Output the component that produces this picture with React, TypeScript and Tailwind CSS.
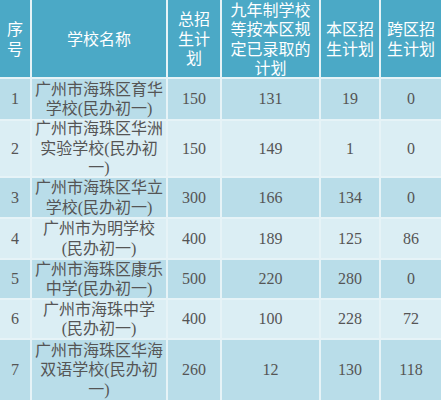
const header = [
  ['序', '号'],
  ['学校名称'],
  ['总招', '生计', '划'],
  ['九年制学校', '等按本区规', '定已录取的', '计划'],
  ['本区招', '生计划'],
  ['跨区招', '生计划'],
];

const rows = [
  { no: '1', name: ['广州市海珠区育华', '学校(民办初一)'], total: '150', done: '131', local: '19', cross: '0', h: 'h-[40px]', dark: true },
  { no: '2', name: ['广州市海珠区华洲', '实验学校(民办初', '一)'], total: '150', done: '149', local: '1', cross: '0', h: 'h-[55px]', dark: false },
  { no: '3', name: ['广州市海珠区华立', '学校(民办初一)'], total: '300', done: '166', local: '134', cross: '0', h: 'h-[39px]', dark: true },
  { no: '4', name: ['广州市为明学校', '(民办初一)'], total: '400', done: '189', local: '125', cross: '86', h: 'h-[39px]', dark: false },
  { no: '5', name: ['广州市海珠区康乐', '中学(民办初一)'], total: '500', done: '220', local: '280', cross: '0', h: 'h-[38px]', dark: true },
  { no: '6', name: ['广州市海珠中学', '(民办初一)'], total: '400', done: '100', local: '228', cross: '72', h: 'h-[38px]', dark: false },
  { no: '7', name: ['广州市海珠区华海', '双语学校(民办初', '一)'], total: '260', done: '12', local: '130', cross: '118', h: 'h-[60px]', dark: true },
];

function Lines({ lines }: { lines: string[] }) {
  return (
    <div className="flex flex-col items-center">
      {lines.map((l, i) => (
        <span key={i} className="whitespace-nowrap h-[19.5px] leading-[19.5px]">{l}</span>
      ))}
    </div>
  );
}

export default function App() {
  return (
    <div
      className="w-[441px] h-[400px] bg-[#e6f3f7] grid grid-cols-[30px_134px_52px_97px_58px_1fr] gap-[2px] text-[16px] leading-[19.5px] overflow-hidden"
      style={{ fontFamily: '"Liberation Serif", "Noto Sans CJK SC", serif' }}
    >
      {header.map((lines, i) => (
        <div
          key={i}
          className="h-[77px] bg-[#4ba9c6] text-white flex items-center justify-center text-center"
          style={{ fontFamily: '"Noto Sans CJK SC", sans-serif' }}
        >
          <Lines lines={lines} />
        </div>
      ))}
      {rows.map((r) => {
        const bg = r.dark ? 'bg-[#b9dde9]' : 'bg-[#dbeef4]';
        const cell = `${r.h} ${bg} flex items-center justify-center text-center text-[#555555]`;
        return [
          <div key={r.no + 'a'} className={cell}>{r.no}</div>,
          <div key={r.no + 'b'} className={cell}><Lines lines={r.name} /></div>,
          <div key={r.no + 'c'} className={cell}>{r.total}</div>,
          <div key={r.no + 'd'} className={cell}>{r.done}</div>,
          <div key={r.no + 'e'} className={cell}>{r.local}</div>,
          <div key={r.no + 'f'} className={cell}>{r.cross}</div>,
        ];
      })}
    </div>
  );
}
